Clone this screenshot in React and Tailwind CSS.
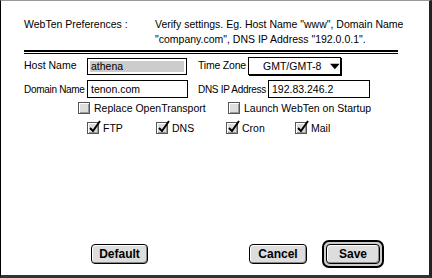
import React from "react";

const F = { fontFamily: '"Liberation Sans", sans-serif' };

function Check({ checked, label, className = "" }) {
  return (
    <div className={"flex items-center whitespace-nowrap shrink-0 " + className}>
      <div className="relative shrink-0 w-[12px] h-[12px] border border-[#555] bg-[#ddd] shadow-[inset_1px_1px_0_#fff,inset_-1px_-1px_0_#999]">
        {checked && (
          <svg className="absolute left-[0px] top-[-3px]" width="14" height="14" viewBox="0 0 14 14">
            <path d="M2 8 L5 11 L12 1" stroke="#000" strokeWidth="2" fill="none" />
          </svg>
        )}
      </div>
      <span className="ml-[4px] text-[10.5px] leading-none text-black" style={F}>{label}</span>
    </div>
  );
}

function Btn({ children, w, def }) {
  const inner = (
    <div
      className={`h-[20px] ${w} flex items-center justify-center rounded-[4px] border border-black bg-[#ddd] shadow-[inset_1px_1px_0_#fff,inset_-1px_-1px_0_#888] text-[12px] font-bold text-black`}
      style={{ fontFamily: '"Liberation Sans", sans-serif' }}
    >
      {children}
    </div>
  );
  if (def)
    return (
      <div className="p-[2px] border-[2px] border-black rounded-[7px] bg-[#ccc]">{inner}</div>
    );
  return inner;
}

export default function App() {
  return (
    <div className="w-[432px] h-[278px] bg-white relative overflow-hidden border-l border-t border-l-black border-t-[#999] border-r-[3px] border-r-[#222] border-b-[3px] border-b-[#333] flex flex-col whitespace-nowrap text-[10.5px] text-black" style={F}>
      <div className="flex pl-[23px] pt-[16px] leading-[15px]">
        <div className="w-[131px] shrink-0">WebTen Preferences :</div>
        <div>
          Verify settings. Eg. Host Name "www", Domain Name<br />"company.com", DNS IP Address "192.0.0.1".
        </div>
      </div>
      <div className="ml-[23px] w-[374px] mt-[3px] h-[4px] border-t-[2px] border-b border-black" />
      <div className="flex items-center mt-[3px] pl-[23px]">
        <div className="w-[63px] shrink-0">Host Name</div>
        <div className="w-[100px] h-[17px] shrink-0 border border-black bg-white p-[2px]">
          <div className="h-full bg-[#ccc] flex items-center pl-[1px] leading-none">athena</div>
        </div>
        <div className="ml-[11px] w-[50px] shrink-0 tracking-[-0.2px]">Time Zone</div>
        <div className="w-[93px] h-[18px] shrink-0 border border-black shadow-[1px_1px_0_#000] flex items-center pl-[14px]">
          <span className="leading-none">GMT/GMT-8</span>
          <svg className="ml-[9px]" width="12" height="7" viewBox="0 0 12 7"><path d="M0 0H12L6 7Z" fill="#000" /></svg>
        </div>
      </div>
      <div className="flex items-center mt-[5px] pl-[23px]">
        <div className="w-[63px] shrink-0 text-[10px] tracking-[-0.3px]">Domain Name</div>
        <div className="w-[101px] h-[18px] shrink-0 border border-black flex items-center pl-[3px] leading-none">tenon.com</div>
        <div className="ml-[10px] w-[70px] shrink-0 text-[10px] tracking-[-0.3px]">DNS IP Address</div>
        <div className="w-[102px] h-[18px] shrink-0 border border-black flex items-center pl-[3px] leading-none">192.83.246.2</div>
      </div>
      <div className="flex mt-[4px] pl-[77px]">
        <Check label="Replace OpenTransport" className="w-[150px]" />
        <Check label="Launch WebTen on Startup" />
      </div>
      <div className="flex mt-[8px] pl-[86px]">
        <Check checked label="FTP" className="w-[69px]" />
        <Check checked label="DNS" className="w-[70px]" />
        <Check checked label="Cron" className="w-[69px]" />
        <Check checked label="Mail" />
      </div>
      <div className="flex-1" />
      <div className="flex items-center pb-[7px] pl-[90px]">
        <Btn w="w-[57px]">Default</Btn>
        <div className="ml-[101px]"><Btn w="w-[58px]">Cancel</Btn></div>
        <div className="ml-[15px]"><Btn w="w-[54px]" def>Save</Btn></div>
      </div>
    </div>
  );
}
